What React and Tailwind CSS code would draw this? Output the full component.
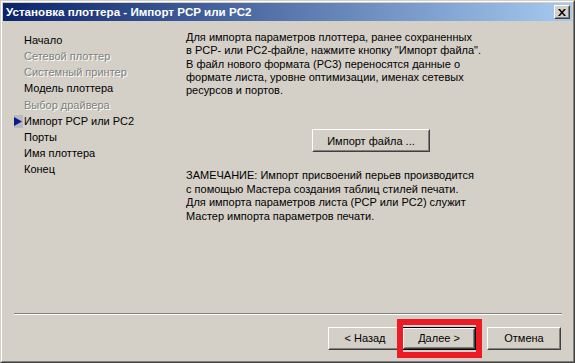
import React from "react";

const steps = [
  { label: "Начало" },
  { label: "Сетевой плоттер", disabled: true },
  { label: "Системный принтер", disabled: true },
  { label: "Модель плоттера" },
  { label: "Выбор драйвера", disabled: true },
  { label: "Импорт PCP или PC2", current: true },
  { label: "Порты" },
  { label: "Имя плоттера" },
  { label: "Конец" },
];

const Btn = ({ children, className = "", isDefault }) => (
  <div className={`${isDefault ? "border border-black" : ""} ${className}`}>
    <div className="h-full w-full border border-t-white border-l-white border-r-[#404040] border-b-[#404040] bg-[#d4d0c8]">
      <div className="h-full w-full border border-t-[#d4d0c8] border-l-[#d4d0c8] border-r-[#808080] border-b-[#808080] flex items-center justify-center text-black">
        {children}
      </div>
    </div>
  </div>
);

export default function App() {
  return (
    <div
      className="w-[575px] h-[363px] border border-t-[#d4d0c8] border-l-[#d4d0c8] border-r-[#404040] border-b-[#404040] bg-[#d4d0c8] text-[11px] relative"
      style={{ fontFamily: '"Liberation Sans", Arial, sans-serif' }}
    >
      <div className="h-full w-full border border-t-white border-l-white border-r-[#808080] border-b-[#808080] p-px flex flex-col">
        {/* title bar */}
        <div className="h-[18px] shrink-0 flex items-center justify-between pl-[3px] pr-[2px] bg-[linear-gradient(90deg,#0a246a,#a6caf0)]">
          <span className="text-white font-bold text-[11.6px] leading-none whitespace-nowrap">
            Установка плоттера - Импорт PCP или PC2
          </span>
          <Btn className="w-[16px] h-[14px]">
            <svg width="8" height="7" viewBox="0 0 8 7">
              <path d="M0 0h2l2 2.5L6 0h2L5 3.5 8 7H6L4 4.5 2 7H0l3-3.5z" fill="#000" />
            </svg>
          </Btn>
        </div>

        {/* body */}
        <div className="flex-1 flex flex-col">
          <div className="flex-1 flex">
            <div className="w-[172px] pl-[11px] pt-[11px]">
              {steps.map((s) => (
                <div key={s.label} className="h-[16.2px] flex items-center">
                  <div className={`w-[9px] h-[13px] mr-[1px] flex items-center ${s.current ? "bg-[#b9b9bc]" : ""}`}>
                    {s.current && (
                      <svg width="8" height="9" viewBox="0 0 8 9">
                        <path d="M0 0L8 4.5 0 9z" fill="#0a1a8a" />
                      </svg>
                    )}
                  </div>
                  <span
                    className={`whitespace-nowrap ${s.disabled ? "text-[#808080] [text-shadow:1px_1px_0_#fff]" : "text-black"}`}
                  >
                    {s.label}
                  </span>
                </div>
              ))}
            </div>

            <div className="w-[392px] pt-[10px] flex flex-col">
              <p className="leading-[13.3px] pl-[11px] text-black whitespace-nowrap">
                Для импорта параметров плоттера, ранее сохраненных
                <br />в PCP- или PC2-файле, нажмите кнопку "Импорт файла".
                <br />В файл нового формата (PC3) переносятся данные о
                <br />формате листа, уровне оптимизации, именах сетевых
                <br />ресурсов и портов.
              </p>
              <div className="flex justify-center pt-[32px]">
                <Btn className="w-[118px] h-[23px]">Импорт файла ...</Btn>
              </div>
              <p className="leading-[13.5px] pl-[11px] pt-[17px] text-black whitespace-nowrap">
                ЗАМЕЧАНИЕ: Импорт присвоений перьев производится
                <br />с помощью Мастера создания таблиц стилей печати.
                <br />Для импорта параметров листа (PCP или PC2) служит
                <br />Мастер импорта параметров печати.
              </p>
            </div>
          </div>

          {/* separator */}
          <div className="ml-[11px] mr-[10px] h-[2px] border-t border-t-[#808080] border-b border-b-white" />

          {/* buttons */}
          <div className="h-[45px] flex items-start justify-end pt-[12px] pr-[11px]">
            <Btn className="w-[74px] h-[23px]">&lt; Назад</Btn>
            <Btn className="w-[74px] h-[23px]" isDefault>
              Далее &gt;
            </Btn>
            <Btn className="w-[74px] h-[23px] ml-[11px]">Отмена</Btn>
          </div>
        </div>
      </div>

      {/* red highlight */}
      <div className="absolute left-[396px] top-[318px] w-[85px] h-[39px] border-[6px] border-[#ed1c24]" />
    </div>
  );
}
